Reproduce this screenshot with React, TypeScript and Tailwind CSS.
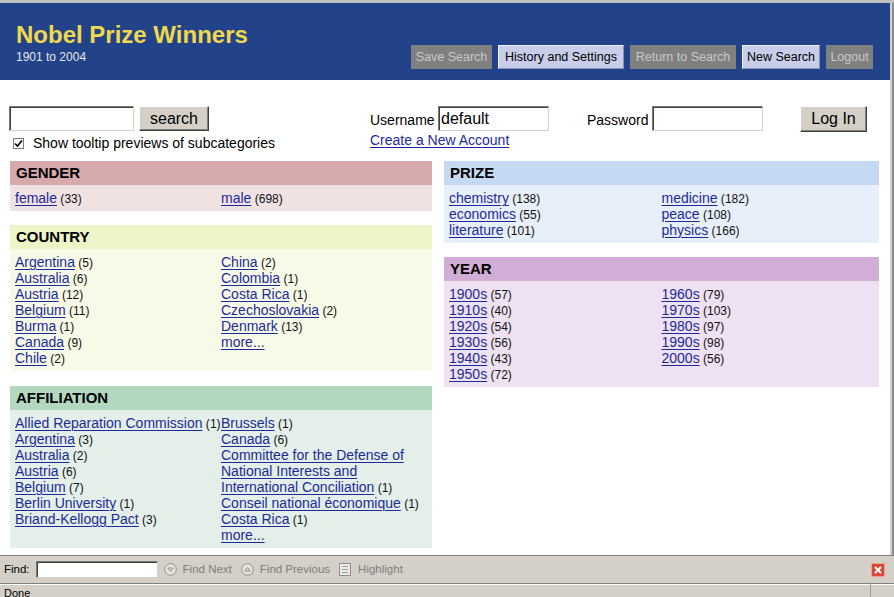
import React from "react";

type Item = { label: string; count?: number };

const FONT = "font-['Liberation_Sans',Arial,Helvetica,sans-serif]";

function Entry({ item, first }: { item: Item; first?: boolean }) {
  return (
    <div className={`text-[14px] leading-[16px] ${first ? "pl-[5px]" : ""}`}>
      <a href="#" className="text-[#1c2a9c] underline underline-offset-[2px] decoration-1">
        {item.label}
      </a>
      {item.count !== undefined && (
        <span className="text-[12px] leading-[12px] text-[#111]"> ({item.count})</span>
      )}
    </div>
  );
}

function Section({
  title,
  head,
  body,
  left,
  right,
}: {
  title: string;
  head: string;
  body: string;
  left: Item[];
  right: Item[];
}) {
  return (
    <div>
      <div className={`h-[24px] flex items-center pl-[6px] text-[15px] font-bold text-black ${head}`}>
        {title}
      </div>
      <div className={`grid grid-cols-2 pt-[5px] pb-[5px] text-[14px] leading-[16px] ${body}`}>
        <div>
          {left.map((it) => (
            <Entry key={it.label} item={it} first />
          ))}
        </div>
        <div>
          {right.map((it) => (
            <Entry key={it.label} item={it} />
          ))}
        </div>
      </div>
    </div>
  );
}

const gender = { left: [{ label: "female", count: 33 }], right: [{ label: "male", count: 698 }] };
const country = {
  left: [
    { label: "Argentina", count: 5 },
    { label: "Australia", count: 6 },
    { label: "Austria", count: 12 },
    { label: "Belgium", count: 11 },
    { label: "Burma", count: 1 },
    { label: "Canada", count: 9 },
    { label: "Chile", count: 2 },
  ],
  right: [
    { label: "China", count: 2 },
    { label: "Colombia", count: 1 },
    { label: "Costa Rica", count: 1 },
    { label: "Czechoslovakia", count: 2 },
    { label: "Denmark", count: 13 },
    { label: "more..." },
  ],
};
const affiliation = {
  left: [
    { label: "Allied Reparation Commission", count: 1 },
    { label: "Argentina", count: 3 },
    { label: "Australia", count: 2 },
    { label: "Austria", count: 6 },
    { label: "Belgium", count: 7 },
    { label: "Berlin University", count: 1 },
    { label: "Briand-Kellogg Pact", count: 3 },
  ],
  right: [
    { label: "Brussels", count: 1 },
    { label: "Canada", count: 6 },
    { label: "Committee for the Defense of National Interests and International Conciliation", count: 1 },
    { label: "Conseil national économique", count: 1 },
    { label: "Costa Rica", count: 1 },
    { label: "more..." },
  ],
};
const prize = {
  left: [
    { label: "chemistry", count: 138 },
    { label: "economics", count: 55 },
    { label: "literature", count: 101 },
  ],
  right: [
    { label: "medicine", count: 182 },
    { label: "peace", count: 108 },
    { label: "physics", count: 166 },
  ],
};
const year = {
  left: [
    { label: "1900s", count: 57 },
    { label: "1910s", count: 40 },
    { label: "1920s", count: 54 },
    { label: "1930s", count: 56 },
    { label: "1940s", count: 43 },
    { label: "1950s", count: 72 },
  ],
  right: [
    { label: "1960s", count: 79 },
    { label: "1970s", count: 103 },
    { label: "1980s", count: 97 },
    { label: "1990s", count: 98 },
    { label: "2000s", count: 56 },
  ],
};

function HeadButton({ label, active, w }: { label: string; active?: boolean; w: string }) {
  return (
    <div
      className={`${w} h-[24px] flex items-center justify-center text-[12.5px] ${
        active
          ? "bg-[#c8cdea] text-black border border-[#eef0ff] border-b-[#8a90b8] border-r-[#8a90b8]"
          : "bg-[#808080] text-[#c9c9c9]"
      }`}
    >
      {label}
    </div>
  );
}

const sunken =
  "bg-white border border-t-[#7a7a7a] border-l-[#7a7a7a] border-b-[#d4d0c8] border-r-[#d4d0c8] shadow-[inset_1px_1px_0_#404040]";
const raised =
  "bg-[#d4d0c8] border border-t-[#ffffff] border-l-[#ffffff] border-b-[#404040] border-r-[#404040] shadow-[inset_-1px_-1px_0_#808080]";

export default function App() {
  return (
    <div className={`w-[894px] h-[597px] overflow-hidden flex flex-col bg-[#d4d0c8] ${FONT}`}>
      <div className="h-[3px] bg-[#c0c0c0] shrink-0" />
      <div className="flex h-[552px] shrink-0">
        {/* page */}
        <div className="w-[890px] h-full bg-white overflow-hidden">
          {/* header */}
          <div className="h-[77px] bg-[#22438a] flex justify-between">
            <div className="pl-[16px] pt-[18px]">
              <div className="text-[24px] leading-[28px] font-bold text-[#f0d84c]">Nobel Prize Winners</div>
              <div className="text-[12px] leading-[14px] text-[#e6e6e6] mt-[1px]">1901 to 2004</div>
            </div>
            <div className="flex gap-[6px] pt-[42px] pr-[17px]">
              <HeadButton label="Save Search" w="w-[81px]" />
              <HeadButton label="History and Settings" active w="w-[126px]" />
              <HeadButton label="Return to Search" w="w-[106px]" />
              <HeadButton label="New Search" active w="w-[78px]" />
              <HeadButton label="Logout" w="w-[47px]" />
            </div>
          </div>

          {/* search / login */}
          <div className="h-[81px] flex pl-[9px] pt-[26px]">
            <div className="w-[361px]">
              <div className="flex items-center gap-[5px] h-[25px]">
                <input className={`w-[125px] h-[25px] outline-none ${sunken}`} />
                <button className={`w-[70px] h-[25px] text-[16px] text-black ${raised}`}>search</button>
              </div>
              <div className="flex items-center mt-[4px] h-[16px] pl-[4px]">
                <span className="w-[11px] h-[11px] bg-white border border-[#7a7a7a] flex items-center justify-center">
                  <svg width="9" height="9" viewBox="0 0 9 9">
                    <path d="M1 4.5 L3.5 7 L8 1.5" stroke="#000" strokeWidth="1.6" fill="none" />
                  </svg>
                </span>
                <span className="ml-[9px] text-[14px] leading-[16px] text-black">
                  Show tooltip previews of subcategories
                </span>
              </div>
            </div>
            <div className="w-[217px]">
              <div className="flex items-center h-[25px]">
                <span className="text-[14px] text-black w-[68px] pt-[3px]">Username</span>
                <input
                  defaultValue="default"
                  className={`w-[111px] h-[25px] text-[16px] text-black pl-[2px] outline-none ${sunken}`}
                />
              </div>
              <div className="mt-[1px] leading-[16px]">
                <a href="#" className="text-[14px] text-[#1c2a9c] underline underline-offset-[2px]">
                  Create a New Account
                </a>
              </div>
            </div>
            <div className="flex items-start">
              <div className="flex items-center h-[25px]">
                <span className="text-[14px] text-black w-[65px] pt-[3px]">Password</span>
                <input className={`w-[111px] h-[25px] outline-none ${sunken}`} />
              </div>
              <button className={`ml-[37px] w-[67px] h-[26px] text-[16px] text-black ${raised}`}>Log In</button>
            </div>
          </div>

          {/* sections */}
          <div className="flex pl-[10px] gap-[12px]">
            <div className="w-[422px] flex flex-col">
              <Section title="GENDER" head="bg-[#d6aaac]" body="bg-[#f0e1e3]" {...gender} />
              <div className="h-[14px]" />
              <Section title="COUNTRY" head="bg-[#ecf4c8]" body="bg-[#f7fae6]" {...country} />
              <div className="h-[15px]" />
              <Section title="AFFILIATION" head="bg-[#b2d9c0]" body="bg-[#e3efe8]" {...affiliation} />
            </div>
            <div className="w-[435px] flex flex-col">
              <Section title="PRIZE" head="bg-[#c5d9f2]" body="bg-[#e7effa]" {...prize} />
              <div className="h-[14px]" />
              <Section title="YEAR" head="bg-[#d0aed5]" body="bg-[#eee1f1]" {...year} />
            </div>
          </div>
        </div>
        {/* window frame right */}
        <div className="w-[4px] h-full bg-[#8c8c8c] border-l-[2px] border-[#d4d0c8]" />
      </div>

      {/* find bar */}
      <div className="h-[28px] shrink-0 border-t border-[#808080] flex items-center text-[11.5px] text-black relative">
        <span className="ml-[4px]">Find:</span>
        <input className={`ml-[6px] w-[122px] h-[17px] outline-none ${sunken}`} />
        <svg className="ml-[6px]" width="13" height="13" viewBox="0 0 13 13">
          <circle cx="6.5" cy="6.5" r="5.8" fill="#e6e3dc" stroke="#8f8f8f" />
          <path d="M3.8 5 L9.2 5 L6.5 8.6 Z" fill="none" stroke="#8f8f8f" />
        </svg>
        <span className="ml-[6px] text-[#7d7d7d]">Find Next</span>
        <svg className="ml-[9px]" width="13" height="13" viewBox="0 0 13 13">
          <circle cx="6.5" cy="6.5" r="5.8" fill="#e6e3dc" stroke="#8f8f8f" />
          <path d="M3.8 8 L9.2 8 L6.5 4.4 Z" fill="none" stroke="#8f8f8f" />
        </svg>
        <span className="ml-[6px] text-[#7d7d7d]">Find Previous</span>
        <svg className="ml-[9px]" width="12" height="13" viewBox="0 0 12 13">
          <rect x="0.5" y="0.5" width="11" height="12" fill="#eceae4" stroke="#8f8f8f" />
          <path d="M3 3.5 H9 M3 6.5 H9 M3 9.5 H9" stroke="#a0a0a0" />
        </svg>
        <span className="ml-[7px] text-[#7d7d7d]">Highlight</span>
        <div className="ml-auto mr-[9px] w-[14px] h-[14px] bg-[#d9483b] border border-[#f0a090] flex items-center justify-center">
          <svg width="8" height="8" viewBox="0 0 8 8">
            <path d="M1 1 L7 7 M7 1 L1 7" stroke="#fff" strokeWidth="2" />
          </svg>
        </div>
      </div>

      {/* status bar */}
      <div className="flex-1 border-t border-[#808080] shadow-[inset_0_1px_0_#ffffff] flex">
        <div className="w-[871px] border-r border-[#a0a0a0] pl-[4px] pt-[3px] text-[11px] leading-[12px] text-black">
          Done
        </div>
      </div>
    </div>
  );
}
